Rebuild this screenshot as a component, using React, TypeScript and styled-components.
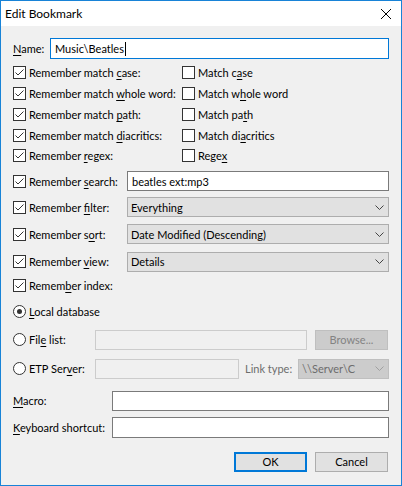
import React from "react";
import styled, { createGlobalStyle } from "styled-components";

const GlobalStyle = createGlobalStyle`
  html, body {
    margin: 0;
    padding: 0;
    background: #f0f0f0;
  }
  body {
    font-family: Lato, "Liberation Sans", Arial, sans-serif;
    font-size: 11px;
    color: #000;
  }
`;

const Window = styled.div`
  width: 402px;
  height: 486px;
  box-sizing: border-box;
  border: 1px solid #1883d7;
  background: #f0f0f0;
  display: flex;
  flex-direction: column;
  overflow: hidden;
`;

const TitleBar = styled.div`
  height: 25px;
  flex: none;
  background: #fff;
  display: flex;
  align-items: center;
  justify-content: space-between;
  padding: 0 10px 0 4px;
`;

const Title = styled.span`
  font-size: 12px;
  color: #000;
`;

const Body = styled.div`
  display: flex;
  flex-direction: column;
  padding: 0 12px;
`;

const Row = styled.div<{ $top: number; $h: number }>`
  display: flex;
  align-items: center;
  height: ${(p) => p.$h}px;
  margin-top: ${(p) => p.$top}px;
  flex: none;
`;

const Cell = styled.div<{ $w: number }>`
  display: flex;
  align-items: center;
  width: ${(p) => p.$w}px;
  flex: none;
`;

const Text = styled.span<{ $disabled?: boolean }>`
  white-space: nowrap;
  color: ${(p) => (p.$disabled ? "#6d6d6d" : "#000")};
`;

const Key = styled.u`
  text-decoration-thickness: 1px;
  text-underline-offset: 2px;
`;

const Box = styled.span`
  width: 13px;
  height: 13px;
  box-sizing: border-box;
  border: 1px solid #333;
  background: #fff;
  margin-right: 3px;
  flex: none;
  display: flex;
  align-items: center;
  justify-content: center;
`;

const Round = styled.span<{ $on?: boolean }>`
  width: 13px;
  height: 13px;
  box-sizing: border-box;
  border: 1px solid #333;
  border-radius: 50%;
  background: #fff;
  margin-right: 3px;
  flex: none;
  display: flex;
  align-items: center;
  justify-content: center;
  &::after {
    content: "";
    display: ${(p) => (p.$on ? "block" : "none")};
    width: 5px;
    height: 5px;
    border-radius: 50%;
    background: #333;
  }
`;

const Edit = styled.div<{ $focused?: boolean; $disabled?: boolean; $w?: number }>`
  box-sizing: border-box;
  height: 100%;
  ${(p) => (p.$w ? `width: ${p.$w}px; flex: none;` : "flex: 1;")}
  border: 1px solid
    ${(p) => (p.$focused ? "#0078d7" : p.$disabled ? "#cccccc" : "#7a7a7a")};
  background: ${(p) => (p.$disabled ? "#f0f0f0" : "#fff")};
  display: flex;
  align-items: center;
  padding-left: 4px;
  white-space: nowrap;
`;

const Caret = styled.span`
  display: inline-block;
  width: 1px;
  height: 14px;
  background: #000;
  margin-left: 1px;
`;

const Combo = styled.div<{ $disabled?: boolean }>`
  box-sizing: border-box;
  height: 100%;
  flex: 1;
  border: 1px solid ${(p) => (p.$disabled ? "#bfbfbf" : "#adadad")};
  background: ${(p) => (p.$disabled ? "#cccccc" : "#e1e1e1")};
  color: ${(p) => (p.$disabled ? "#6d6d6d" : "#000")};
  display: flex;
  align-items: center;
  justify-content: space-between;
  padding: 0 4px 0 3px;
  white-space: nowrap;
`;

const PushButton = styled.div<{ $default?: boolean; $disabled?: boolean }>`
  box-sizing: border-box;
  width: 73px;
  height: 100%;
  flex: none;
  border: ${(p) =>
    p.$default
      ? "2px solid #0078d7"
      : `1px solid ${p.$disabled ? "#bfbfbf" : "#adadad"}`};
  background: ${(p) => (p.$disabled ? "#cccccc" : "#e1e1e1")};
  color: ${(p) => (p.$disabled ? "#838383" : "#000")};
  display: flex;
  align-items: center;
  justify-content: center;
`;

const Spacer = styled.div<{ $w: number }>`
  width: ${(p) => p.$w}px;
  flex: none;
`;

const ButtonBar = styled.div`
  display: flex;
  justify-content: flex-end;
  gap: 8px;
  padding-right: 1px;
  height: 20px;
  margin-top: 14px;
`;

const Check = () => (
  <Box>
    <svg width="11" height="11" viewBox="0 0 11 11">
      <polyline points="1.5,5.5 4,8 9.5,2.5" fill="none" stroke="#333" strokeWidth="1" />
    </svg>
  </Box>
);

const Chevron = ({ color = "#444" }: { color?: string }) => (
  <svg width="9" height="5" viewBox="0 0 9 5">
    <polyline points="0.5,0.5 4.5,4.5 8.5,0.5" fill="none" stroke={color} strokeWidth="1" />
  </svg>
);

const CloseIcon = () => (
  <svg width="10" height="10" viewBox="0 0 10 10">
    <line x1="0" y1="0" x2="10" y2="10" stroke="#000" strokeWidth="1" />
    <line x1="10" y1="0" x2="0" y2="10" stroke="#000" strokeWidth="1" />
  </svg>
);

type Label = [string, string, string];

const pairs: { left: Label; right: Label }[] = [
  { left: ["Remember match ", "c", "ase:"], right: ["Match c", "a", "se"] },
  { left: ["Remember match ", "w", "hole word:"], right: ["Match w", "h", "ole word"] },
  { left: ["Remember match ", "p", "ath:"], right: ["Match pa", "t", "h"] },
  { left: ["Remember match ", "d", "iacritics:"], right: ["Match di", "a", "critics"] },
  { left: ["Remember ", "r", "egex:"], right: ["Rege", "x", ""] },
];

const combos: { label: Label; value: string }[] = [
  { label: ["Remember ", "f", "ilter:"], value: "Everything" },
  { label: ["Remember s", "o", "rt:"], value: "Date Modified (Descending)" },
  { label: ["Remember ", "v", "iew:"], value: "Details" },
];

const Mnemonic = ({ l, disabled }: { l: Label; disabled?: boolean }) => (
  <Text $disabled={disabled}>
    {l[0]}
    <Key>{l[1]}</Key>
    {l[2]}
  </Text>
);

export default function App() {
  return (
    <>
      <GlobalStyle />
      <Window>
        <TitleBar>
          <Title>Edit Bookmark</Title>
          <CloseIcon />
        </TitleBar>
        <Body>
          <Row $top={12} $h={21}>
            <Cell $w={37}>
              <Mnemonic l={["", "N", "ame:"]} />
            </Cell>
            <Edit $focused>
              Music\Beatles
              <Caret />
            </Edit>
          </Row>

          {pairs.map((p, i) => (
            <Row key={i} $top={i === 0 ? 3.5 : 0} $h={20.75}>
              <Cell $w={169}>
                <Check />
                <Mnemonic l={p.left} />
              </Cell>
              <Cell $w={180}>
                <Box />
                <Mnemonic l={p.right} />
              </Cell>
            </Row>
          ))}

          <Row $top={4.75} $h={20}>
            <Cell $w={114}>
              <Check />
              <Mnemonic l={["Remember ", "s", "earch:"]} />
            </Cell>
            <Edit>beatles ext:mp3</Edit>
          </Row>

          {combos.map((c, i) => (
            <Row key={i} $top={i === 0 ? 6 : 7.25} $h={20}>
              <Cell $w={114}>
                <Check />
                <Mnemonic l={c.label} />
              </Cell>
              <Combo>
                {c.value}
                <Chevron />
              </Combo>
            </Row>
          ))}

          <Row $top={3.5} $h={20}>
            <Check />
            <Mnemonic l={["Remem", "b", "er index:"]} />
          </Row>

          <Row $top={6} $h={20}>
            <Round $on />
            <Mnemonic l={["", "L", "ocal database"]} />
          </Row>

          <Row $top={8.5} $h={20}>
            <Cell $w={82}>
              <Round />
              <Mnemonic l={["Fil", "e", " list:"]} />
            </Cell>
            <Edit $disabled />
            <Spacer $w={8} />
            <PushButton $disabled>Browse...</PushButton>
            <Spacer $w={1} />
          </Row>

          <Row $top={9} $h={20.5}>
            <Cell $w={82}>
              <Round />
              <Mnemonic l={["ETP Ser", "v", "er:"]} />
            </Cell>
            <Edit $disabled $w={144} />
            <Spacer $w={6} />
            <Cell $w={53}>
              <Text $disabled>Link type:</Text>
            </Cell>
            <Combo $disabled>
              \\Server\C
              <Chevron color="#a0a0a0" />
            </Combo>
          </Row>

          <Row $top={11.5} $h={20}>
            <Cell $w={99}>
              <Mnemonic l={["", "M", "acro:"]} />
            </Cell>
            <Edit />
          </Row>

          <Row $top={6.5} $h={20.5}>
            <Cell $w={99}>
              <Mnemonic l={["", "K", "eyboard shortcut:"]} />
            </Cell>
            <Edit />
          </Row>

          <ButtonBar>
            <PushButton $default>OK</PushButton>
            <PushButton>Cancel</PushButton>
          </ButtonBar>
        </Body>
      </Window>
    </>
  );
}
